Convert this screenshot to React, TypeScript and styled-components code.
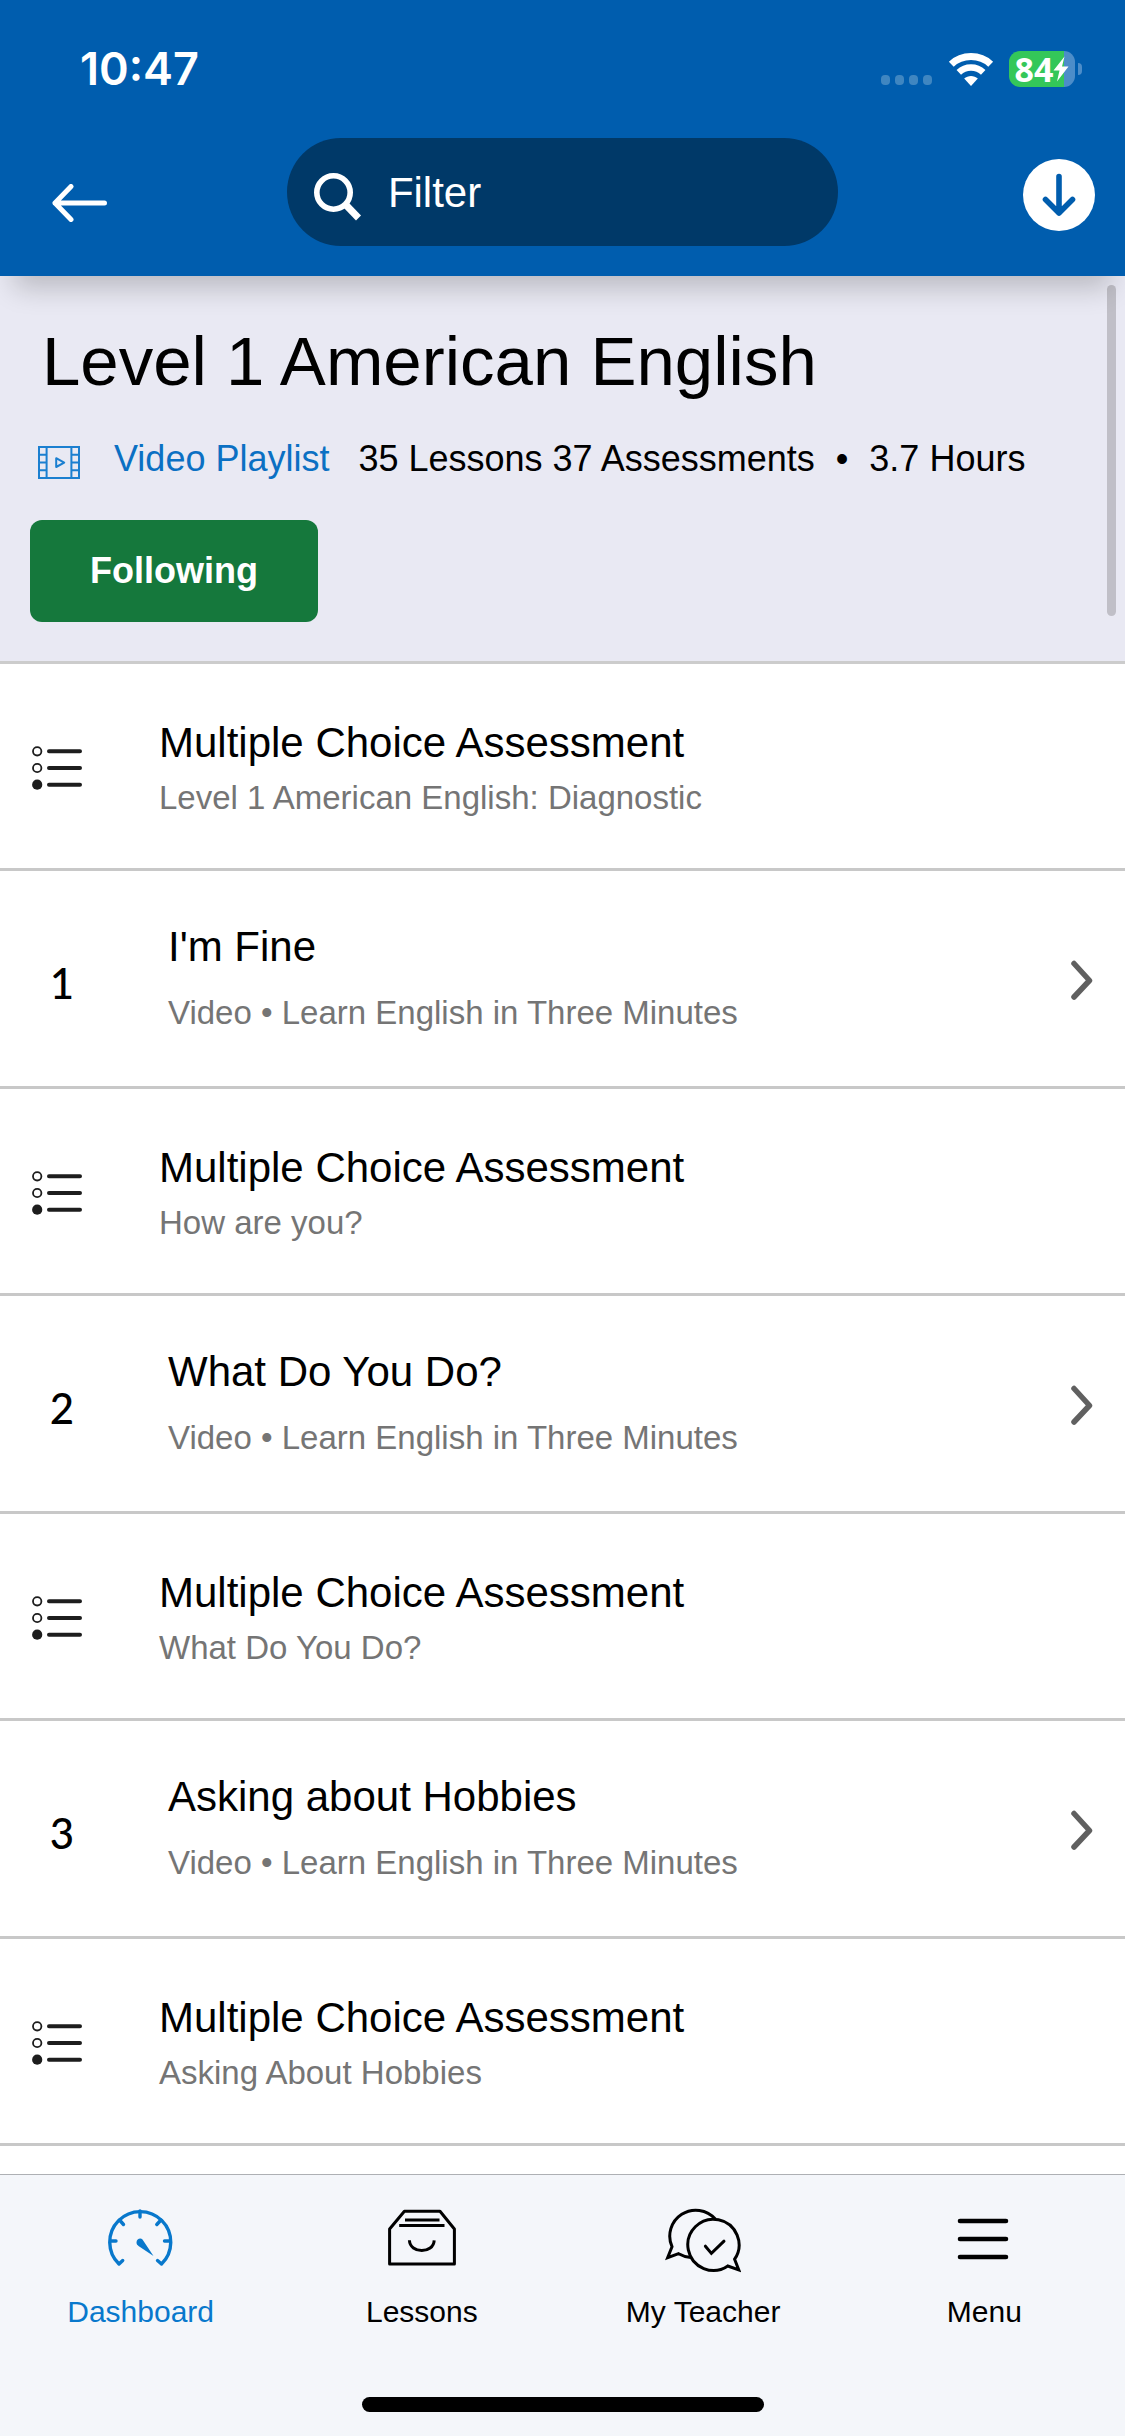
import React from 'react';
import styled, { createGlobalStyle } from 'styled-components';

const GlobalStyle = createGlobalStyle`
  *, *::before, *::after { box-sizing: border-box; }
  body {
    margin: 0;
    background: #ffffff;
    color: #000000;
    font-family: "Liberation Sans", Arial, Helvetica, sans-serif;
  }
  button, input { font: inherit; }
  a { color: inherit; text-decoration: none; }
  svg { display: block; flex: none; }
`;

const Screen = styled.div`
  display: flex;
  flex-direction: column;
  height: 100vh;
  overflow: hidden;
`;

/* ---------- Header ---------- */

const Header = styled.header`
  position: relative;
  z-index: 1;
  flex: none;
  background: #005dae;
  color: #ffffff;
  box-shadow: 0 26px 26px -14px rgba(0, 0, 0, 0.2);
`;

const StatusBar = styled.div`
  display: flex;
  align-items: center;
  justify-content: space-between;
  height: 138px;
  padding: 0 43px 0 80px;
`;

const Clock = styled.time`
  font: 600 45px/54px Inter, sans-serif;
`;

const StatusIcons = styled.div`
  display: flex;
  align-items: flex-end;
  gap: 15px;
`;

const Battery = styled.div`
  display: flex;
  align-items: center;
  gap: 3px;
`;

const BatteryBody = styled.div`
  display: flex;
  align-items: center;
  justify-content: center;
  width: 66px;
  height: 36px;
  border-radius: 11px;
  background: linear-gradient(to right, #34c759 84%, #4c8dc9 84%);
  font: 700 34px/36px "Noto Sans", sans-serif;
`;

const BatteryCap = styled.div`
  width: 4px;
  height: 12px;
  border-radius: 0 6px 6px 0;
  background: #4c8dc9;
`;

const NavBar = styled.div`
  display: grid;
  grid-template-columns: 1fr 49% 1fr;
  align-items: end;
  padding-bottom: 30px;
`;

const IconButton = styled.button<{ $side: 'start' | 'end' }>`
  justify-self: ${(p) => p.$side};
  padding: ${(p) => (p.$side === 'start' ? '24px 51px' : '15px 30px')};
  border: 0;
  background: none;
  cursor: pointer;
`;

const SearchBox = styled.label`
  display: flex;
  align-items: center;
  gap: 26px;
  height: 108px;
  padding: 2px 27px 0;
  border-radius: 54px;
  background: #003968;
`;

const SearchInput = styled.input`
  flex: 1;
  min-width: 0;
  padding: 0;
  border: 0;
  outline: 0;
  background: none;
  color: #ffffff;
  font-size: 42px;
  line-height: 48px;
  &::placeholder { color: #ffffff; opacity: 1; }
`;

/* ---------- Course summary ---------- */

const Content = styled.main`
  position: relative;
  flex: 1;
  min-height: 0;
  overflow: hidden;
  background: #ffffff;
`;

const ScrollThumb = styled.div`
  position: absolute;
  top: 9px;
  right: 9px;
  width: 9px;
  height: 331px;
  border-radius: 5px;
  background: #c0bfc7;
`;

const Summary = styled.section`
  padding: 46px 30px 39px;
  border-bottom: 3px solid #cccccc;
  background: #e9e9f3;
`;

const Title = styled.h1`
  margin: 0 12px 36px;
  font-size: 69px;
  font-weight: 400;
  line-height: 80px;
`;

const Meta = styled.div`
  display: flex;
  align-items: flex-end;
  margin: 0 8px 40px;
  font-size: 36px;
  line-height: 42px;
  white-space: nowrap;
`;

const PlaylistLink = styled.a`
  display: flex;
  align-items: flex-end;
  gap: 34px;
  margin-right: 29px;
  color: #0b70c3;
`;

const Dot = styled.span`
  margin: 0 21px;
`;

const FollowButton = styled.button`
  display: block;
  width: 288px;
  height: 102px;
  border: 0;
  border-radius: 12px;
  background: #15783c;
  color: #ffffff;
  font-size: 36px;
  font-weight: 700;
  line-height: 42px;
  cursor: pointer;
`;

/* ---------- Lesson list ---------- */

const List = styled.ol`
  margin: 0;
  padding: 0;
  list-style: none;
`;

const Row = styled.a<{ $lesson: boolean }>`
  display: flex;
  align-items: center;
  padding: ${(p) => (p.$lesson ? '52px 32px 54px' : '55px 32px 51px')};
  border-bottom: 3px solid #c8c8c8;
`;

const Lead = styled.span<{ $wide?: boolean }>`
  flex: none;
  width: ${(p) => (p.$wide ? 136 : 127)}px;
`;

const Index = styled.span`
  display: block;
  width: 60px;
  padding-top: 10px;
  font: 500 42px/50px Lato, sans-serif;
  text-align: center;
`;

const RowText = styled.span<{ $gap: number }>`
  flex: 1;
  display: flex;
  flex-direction: column;
  gap: ${(p) => p.$gap}px;
  min-width: 0;
`;

const RowTitle = styled.span`
  font-size: 42px;
  line-height: 48px;
`;

const RowNote = styled.span`
  color: #757575;
  font-size: 33px;
  line-height: 38px;
`;

/* ---------- Tab bar ---------- */

const TabBar = styled.nav`
  flex: none;
  border-top: 1px solid #aeb0b4;
  background: #f4f6fa;
`;

const Tabs = styled.div`
  display: grid;
  grid-template-columns: repeat(4, 1fr);
  padding-top: 27px;
`;

const Tab = styled.a<{ $active?: boolean }>`
  display: flex;
  flex-direction: column;
  align-items: center;
  gap: 21px;
  color: ${(p) => (p.$active ? '#0878cc' : '#000000')};
  font-size: 30px;
  line-height: 34px;
`;

const HomeBar = styled.div`
  width: 402px;
  max-width: 60%;
  height: 15px;
  margin: 68px auto 24px;
  border-radius: 8px;
  background: #000000;
`;

/* ---------- Icons ---------- */

const SignalDots = () => (
  <svg width="52" height="12" viewBox="0 0 52 12" fill="#3f86c1">
    {[0, 14, 28, 42].map((x) => (
      <rect key={x} x={x} y="0" width="9" height="10" rx="4" />
    ))}
  </svg>
);

const WifiIcon = () => (
  <svg width="46" height="35" viewBox="0 0 46 35" fill="none" stroke="#ffffff">
    <path d="M3.3 12.2C14 2 32 2 42.700 12.200" strokeWidth="7" />
    <path d="M10.800 20.300C17.500 14 28.500 14 35.200 20.300" strokeWidth="6.500" />
    <path d="M16.200 26.600C20 23 26 23 29.800 26.600L23 34Z" fill="#ffffff" stroke="none" />
  </svg>
);

const BoltIcon = () => (
  <svg width="16" height="26" viewBox="0 0 16 26" fill="#ffffff">
    <path d="M11.500 0.500L0.500 14.500H6.500L4 25.500L15.500 10.500H9Z" />
  </svg>
);

const BackIcon = () => (
  <svg width="57" height="38" viewBox="0 0 57 38" fill="none" stroke="#ffffff" strokeWidth="5" strokeLinecap="round" strokeLinejoin="round">
    <path d="M4 19H53.500M20 2.500L4 19L20 35.500" />
  </svg>
);

const SearchIcon = () => (
  <svg width="48" height="56" viewBox="0 -8 48 56" fill="none" stroke="#ffffff">
    <circle cx="19.500" cy="19.500" r="16.700" strokeWidth="5.600" />
    <path d="M31.500 31.500L44.500 45" strokeWidth="7" />
  </svg>
);

const DownloadIcon = () => (
  <svg width="72" height="72" viewBox="0 0 72 72" fill="none">
    <circle cx="36" cy="36" r="36" fill="#ffffff" />
    <path d="M36 17.500V54M22.500 40.500L36 54L49.500 40.500" stroke="#005dae" strokeWidth="5.600" strokeLinecap="round" strokeLinejoin="round" />
  </svg>
);

const FilmIcon = () => (
  <svg width="42" height="34" viewBox="0 0 42 34" fill="none" stroke="#1b7fd0" strokeWidth="2">
    <path d="M1 1H41V32H1ZM8.600 1V32M33.400 1V32M1 8.700H8.600M1 16.500H8.600M1 24.200H8.600M33.400 8.700H41M33.400 16.500H41M33.400 24.200H41" />
    <path d="M18.200 12.200V21L26.200 16.600Z" strokeLinejoin="round" />
  </svg>
);

const ChoiceIcon = () => (
  <svg width="50" height="44" viewBox="0 0 50 44" fill="none" stroke="#1d1d1d">
    <circle cx="5.200" cy="5.300" r="4.200" strokeWidth="1.800" />
    <circle cx="5.200" cy="22" r="4.200" strokeWidth="1.800" />
    <circle cx="5.200" cy="38.700" r="5.100" fill="#1d1d1d" stroke="none" />
    <path d="M17 5.300H48M17 22H48M17 38.700H48" strokeWidth="4" strokeLinecap="round" />
  </svg>
);

const ChevronIcon = () => (
  <svg width="22" height="44" viewBox="0 -4 22 44" fill="none" stroke="#606060" strokeWidth="5.500" strokeLinecap="round" strokeLinejoin="round">
    <path d="M3 3.500L18.500 20.500L3 37" />
  </svg>
);

const tabIcon = { width: 76, height: 72, viewBox: '0 0 76 72', fill: 'none', stroke: 'currentColor' } as const;

const DashboardIcon = () => (
  <svg {...tabIcon} viewBox="1 0 76 72" strokeWidth="3.400" strokeLinecap="round" strokeLinejoin="round">
    <path d="M20.700 58.500L17 62A30.500 30.500 0 1 1 59.500 62L55.500 58.500" />
    <path d="M38 9V15M9 39H14M62.500 39H67.500M17.500 18L21.500 22.500M59 18L54.800 22.500" />
    <path d="M40.500 37.500C38.500 35.500 34.500 37 34.500 40.500C34.500 42.500 35.500 43 36.500 44L51.500 54Z" fill="currentColor" stroke="none" />
  </svg>
);

const LessonsIcon = () => (
  <svg {...tabIcon} strokeWidth="3" strokeLinejoin="round">
    <path d="M5.600 62V27L20.400 9.300H56L70.400 27V62Z" />
    <path d="M21 18H55.500M15.200 23.400H60.500M25.400 38.300C26 52 49.500 52 50.200 38.300" />
  </svg>
);

const TeacherIcon = () => (
  <svg {...tabIcon} strokeWidth="3">
    <path d="M50.300 17A26 26 0 0 0 7 44.700L2.600 55.700L13.600 51.700Q19 54.800 25.800 55.500" />
    <path d="M69.600 57.200A25.600 25.600 0 1 0 62.800 64L73.700 67.800Z" />
    <path d="M40.400 44.200L46.400 51.400L59 39.200" strokeLinecap="round" />
  </svg>
);

const MenuIcon = () => (
  <svg {...tabIcon} viewBox="1 0 76 72" strokeWidth="4.600" strokeLinecap="round">
    <path d="M15 19H61M15 37H61M15 55H61" />
  </svg>
);

/* ---------- Data ---------- */

type Item = { title: string; note: string; index?: number };

const videoNote = 'Video • Learn English in Three Minutes';
const quizTitle = 'Multiple Choice Assessment';

const items: Item[] = [
  { title: quizTitle, note: 'Level 1 American English: Diagnostic' },
  { title: "I'm Fine", note: videoNote, index: 1 },
  { title: quizTitle, note: 'How are you?' },
  { title: 'What Do You Do?', note: videoNote, index: 2 },
  { title: quizTitle, note: 'What Do You Do?' },
  { title: 'Asking about Hobbies', note: videoNote, index: 3 },
  { title: quizTitle, note: 'Asking About Hobbies' },
];

const tabs = [
  { label: 'Dashboard', Icon: DashboardIcon, active: true },
  { label: 'Lessons', Icon: LessonsIcon },
  { label: 'My Teacher', Icon: TeacherIcon },
  { label: 'Menu', Icon: MenuIcon },
];

export default function App() {
  return (
    <Screen>
      <GlobalStyle />
      <Header>
        <StatusBar>
          <Clock>10:47</Clock>
          <StatusIcons>
            <SignalDots />
            <WifiIcon />
            <Battery>
              <BatteryBody>
                84
                <BoltIcon />
              </BatteryBody>
              <BatteryCap />
            </Battery>
          </StatusIcons>
        </StatusBar>
        <NavBar>
          <IconButton $side="start" type="button" aria-label="Back">
            <BackIcon />
          </IconButton>
          <SearchBox>
            <SearchIcon />
            <SearchInput type="text" placeholder="Filter" aria-label="Filter" />
          </SearchBox>
          <IconButton $side="end" type="button" aria-label="Download">
            <DownloadIcon />
          </IconButton>
        </NavBar>
      </Header>

      <Content>
        <Summary>
          <Title>Level 1 American English</Title>
          <Meta>
            <PlaylistLink href="#playlist">
              <FilmIcon />
              Video Playlist
            </PlaylistLink>
            <span>35 Lessons 37 Assessments</span>
            <Dot>•</Dot>
            <span>3.7 Hours</span>
          </Meta>
          <FollowButton type="button">Following</FollowButton>
        </Summary>
        <List>
          {items.map((item, i) => {
            const isLesson = item.index !== undefined;
            return (
              <li key={i}>
                <Row href={`#item-${i}`} $lesson={isLesson}>
                  <Lead $wide={isLesson}>
                    {isLesson ? <Index>{item.index}</Index> : <ChoiceIcon />}
                  </Lead>
                  <RowText $gap={isLesson ? 23 : 12}>
                    <RowTitle>{item.title}</RowTitle>
                    <RowNote>{item.note}</RowNote>
                  </RowText>
                  {isLesson && <ChevronIcon />}
                </Row>
              </li>
            );
          })}
        </List>
        <ScrollThumb />
      </Content>

      <TabBar>
        <Tabs>
          {tabs.map(({ label, Icon, active }) => (
            <Tab key={label} href={`#${label.toLowerCase().replace(' ', '-')}`} $active={active}>
              <Icon />
              {label}
            </Tab>
          ))}
        </Tabs>
        <HomeBar />
      </TabBar>
    </Screen>
  );
}
